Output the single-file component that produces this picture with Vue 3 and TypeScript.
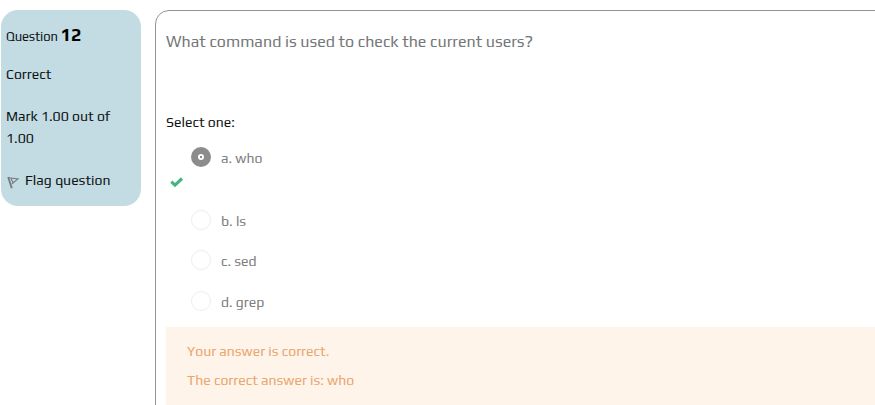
<script setup lang="ts">
interface Answer {
  id: string
  text: string
  checked: boolean
}

const answers: Answer[] = [
  { id: 'a', text: 'a. who', checked: true },
  { id: 'b', text: 'b. ls', checked: false },
  { id: 'c', text: 'c. sed', checked: false },
  { id: 'd', text: 'd. grep', checked: false },
]
</script>

<template>
  <main class="page">
    <aside class="info">
      <h3 class="number">Question <strong>12</strong></h3>
      <div class="state">Correct</div>
      <div class="grade">Mark 1.00 out of 1.00</div>
      <div class="flag">
        <svg width="13" height="13" viewBox="0 0 13 13" fill="none" stroke="#747d80">
          <path d="M1.2 1 4.8 12.3" stroke-width="1.9" />
          <path d="M1.5 1.8 11 3 5 7.8M4 2.2 6 6.8" stroke-width="1.1" />
        </svg>
        <span>Flag question</span>
      </div>
    </aside>

    <section class="content">
      <p class="prompt">What command is used to check the current users?</p>
      <div class="select">Select one:</div>
      <div class="answers">
        <div v-for="a in answers" :key="a.id" class="answer" :class="{ checked: a.checked }">
          <span class="radio"></span>
          <span class="label">{{ a.text }}</span>
          <svg v-if="a.checked" class="tick" width="14" height="11" viewBox="0 0 14 11">
            <path d="M1.3 4.6 5 8.1 12 1.5" fill="none" stroke="#46b382" stroke-width="3.1" />
          </svg>
        </div>
      </div>
      <div class="feedback">
        <p>Your answer is correct.</p>
        <p class="solution">The correct answer is: who</p>
      </div>
    </section>
  </main>
</template>

<style>
body {
  background: #fff;
  overflow: hidden;
}
</style>

<style scoped>
.page {
  display: flex;
  align-items: flex-start;
  box-sizing: border-box;
  width: 875px;
  height: 405px;
  padding: 10px 0 0 1px;
  overflow: hidden;
  font-family: Play, Roboto, sans-serif;
  font-size: 14px;
  line-height: 22px;
  color: #101517;
}
.info {
  box-sizing: border-box;
  flex: none;
  width: 140px;
  height: 196px;
  padding: 13px 5px 0;
  border-radius: 17px;
  background: #c3dbe3;
}
.number {
  margin: 0;
  font-size: 13px;
  font-weight: 400;
  line-height: 24px;
  letter-spacing: -0.12px;
  white-space: nowrap;
}
.number strong {
  font-size: 18px;
  letter-spacing: 0;
  color: #000;
}
.state {
  margin-top: 14px;
}
.grade {
  margin-top: 20px;
}
.flag {
  display: flex;
  align-items: center;
  gap: 5px;
  margin-top: 20px;
  padding-left: 1px;
}
.flag svg {
  margin-top: 4px;
}
.content {
  box-sizing: border-box;
  flex: none;
  width: 740px;
  height: 430px;
  margin-left: 14px;
  padding: 20px 10px 0;
  border: 1px solid #8f9496;
  border-radius: 14px;
}
p {
  margin: 0;
}
.prompt {
  font-size: 16px;
  color: #757779;
}
.select {
  margin-top: 58px;
}
.answers {
  height: 185px;
  padding-top: 14px;
  box-sizing: border-box;
  color: #7e7e7e;
}
.answer {
  display: grid;
  grid-template-columns: 20px 1fr;
  column-gap: 10px;
  align-items: center;
  height: 20px;
  margin-bottom: 20.5px;
  padding-left: 25px;
}
.answer.checked {
  grid-template-rows: 20px 33px;
  height: 53px;
  margin-bottom: 7.6px;
}
.label {
  padding-top: 2px;
}
.radio {
  box-sizing: border-box;
  width: 20px;
  height: 20px;
  border: 1px solid #eeeeee;
  border-radius: 50%;
}
.checked .radio {
  border: 7px solid #8c8c8c;
  background: radial-gradient(circle, #8c8c8c 0 0.8px, #fff 1.4px);
}
.tick {
  align-self: start;
  margin: 10px 0 0 -21px;
}
.feedback {
  width: 730px;
  height: 100px;
  margin-top: 9px;
  padding: 13px 21px 0;
  background: #fff4ea;
  color: #e9a66f;
}
.solution {
  margin-top: 7px;
}
</style>
